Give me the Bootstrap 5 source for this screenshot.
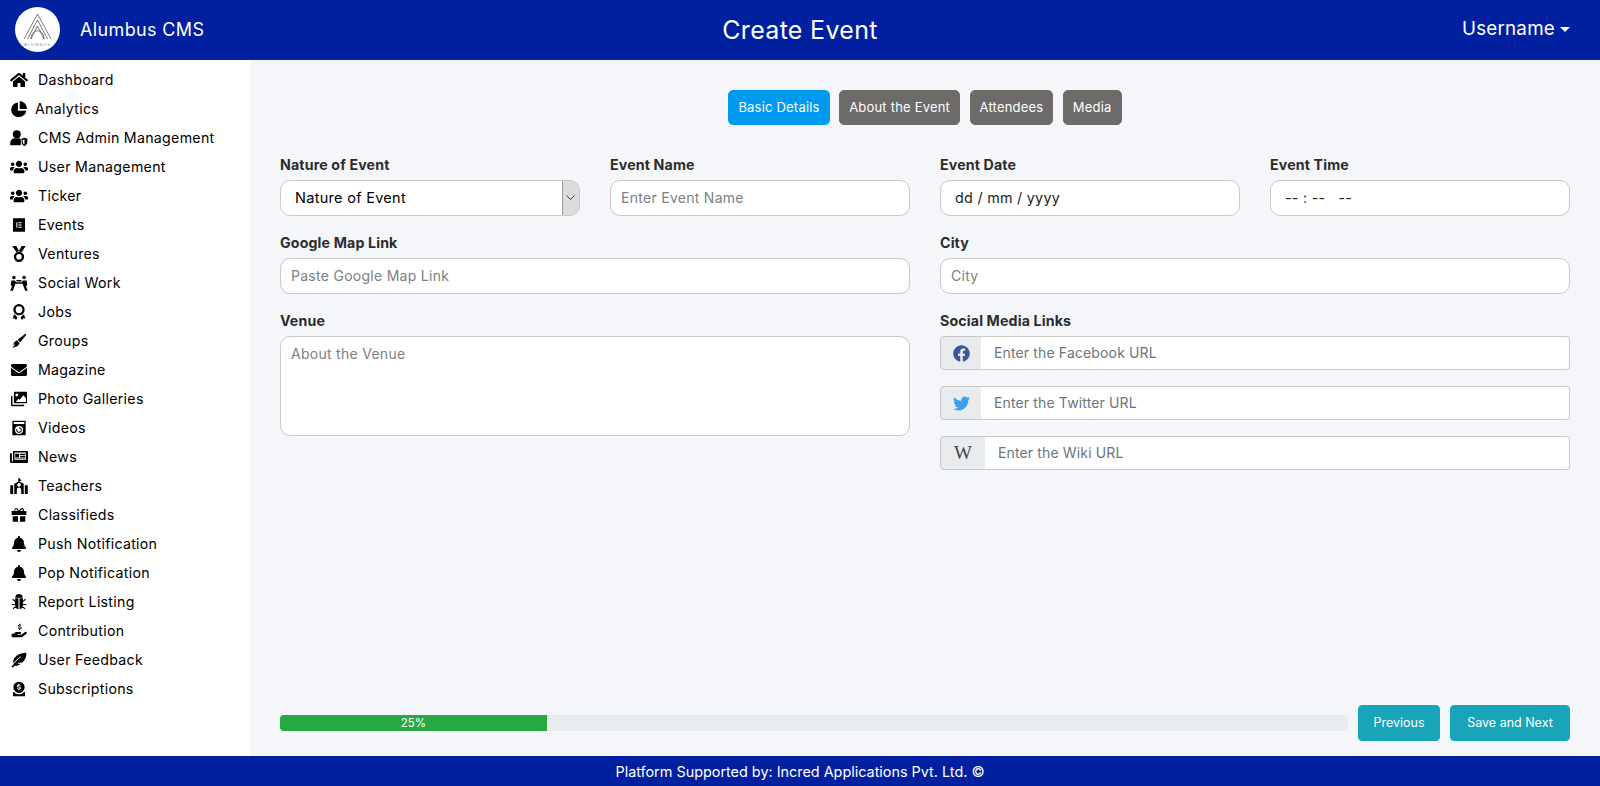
<!DOCTYPE html>
<html lang="en">
<head>
<meta charset="utf-8">
<title>Create Event</title>
<link href="https://cdn.jsdelivr.net/npm/bootstrap@5.3.0/dist/css/bootstrap.min.css" rel="stylesheet">
<style>
html,body{height:100%;overflow:hidden}
body{font-family:Inter,"Open Sans",sans-serif;background:#f5f6fa;color:#000}
.app-shell{height:786px}
.top-bar{height:60px;background:#00209f;border-bottom:1px solid #1d2b5a;color:#fff;flex:none}
.top-side{width:400px}
.logo-disc{width:45px;height:45px;border-radius:50%;background:#fff;margin-left:15px;margin-right:20px;flex:none}
.brand-name{font-size:18px;letter-spacing:.02em}
.page-title{font-size:25px;font-weight:400;letter-spacing:.012em}
.user-toggle{font-size:18.800px;color:#fff;margin-right:30px;padding:0;border:0;background:none;letter-spacing:.012em}
.user-toggle::after{margin-left:5px;vertical-align:.2em}
.side-menu{width:250px;background:#fff;flex:none;padding-top:5px}
.side-item{display:flex;align-items:center;height:29px;padding-left:10px;font-size:14.200px;color:#000;text-decoration:none;letter-spacing:.02em}
.side-glyph{width:18px;height:16px;flex:none;margin-right:10px;fill:#000}
.side-glyph.narrow{margin-right:7px}
.work-area{padding:30px 30px 15px 30px;min-width:0}
.step-btn{height:35px;padding:0 9px;font-size:13px;line-height:33px;color:#fff;background:#6c6b6a;border:1px solid #6c6b6a;border-radius:5px;letter-spacing:.2px}
.step-btn.is-on{background:#0099f0;border-color:#0099f0}
.step-row{gap:9.500px;margin-bottom:30px}
.field-label{display:block;font-size:14.200px;font-weight:700;color:#2c2c2c;line-height:20px;margin-bottom:5px;letter-spacing:.01em}
.field-group{margin-bottom:17px}
.form-control.soft-input,.form-select.soft-input{height:36px;border:1px solid #c9c9c9;border-radius:10px;font-size:14px;letter-spacing:.02em;padding:0 10px 1px;background-color:#fff;box-shadow:none}
.soft-input::placeholder{color:#7c7f84}
.form-select.soft-input{padding-left:14px;font-size:14.500px;color:#000;
background-image:url("data:image/svg+xml,%3Csvg xmlns='http://www.w3.org/2000/svg' width='17' height='34'%3E%3Cpath fill='%23dcdcdc' d='M0 0h17v34H0z'/%3E%3Cpath fill='%23999' d='M0 0h1v34H0z'/%3E%3Cpath fill='none' stroke='%23444' d='M4.500 14.500l4 4 4-4'/%3E%3C/svg%3E");background-position:right 0 center;background-size:17px 34px;background-repeat:no-repeat}
.form-control.soft-input.date-like{padding-left:14px;color:#222;font-size:14.300px}
textarea.form-control.soft-input{height:100px;padding-top:6px;resize:none}
.social-group{height:34px;margin-bottom:16px;flex-wrap:nowrap}
.social-group .input-group-text{width:42px;height:34px;padding:0;justify-content:center;background:#e9ecef;border:1px solid #c9c9c9;border-radius:4px 0 0 4px}
.social-group .input-group-text.wiki-tag{width:46px;font-family:"Liberation Serif",serif;font-size:19px;color:#444}
.social-group .form-control{height:34px;border:1px solid #c9c9c9;border-left:0;border-radius:0 4px 4px 0;font-size:14px;letter-spacing:.01em;padding:0 12px 2px 13px}
.social-group .form-control::placeholder{color:#6c757d}
.social-mark{width:17px;height:17px}
.bottom-row{gap:10px}
.track{flex:1;height:16px;background:#e9ecef;border-radius:4px;font-size:11.500px}
.track .progress-bar{background:#28a745;width:25%;padding-top:2px}
.go-btn{height:36px;padding:1px 0 0;font-size:12.500px;color:#fff;background:#19a5b9;border:1px solid #19a5b9;border-radius:4px}
.go-prev{width:82px}
.go-next{width:120px}
.bottom-bar{height:30px;background:#00209f;color:#fff;font-size:14.400px;flex:none;padding-top:1px}
</style>
</head>
<body>
<div class="app-shell d-flex flex-column">
  <header class="top-bar d-flex align-items-center justify-content-between">
    <div class="top-side d-flex align-items-center">
      <div class="logo-disc d-flex align-items-center justify-content-center">
        <svg width="45" height="45" viewBox="0 0 45 45" fill="none" stroke="#444" stroke-width=".7">
          <path d="M9 32 22.500 7 36 32M12.500 32 22.500 13 32.500 32M16 32 22.500 19 29 32M16 32c0-11 13-11 13 0"/>
          <text x="22.500" y="39" text-anchor="middle" font-family="Liberation Sans,sans-serif" font-size="4.400" letter-spacing=".8" fill="#999" stroke="none">ALUMBUS</text>
        </svg>
      </div>
      <span class="brand-name">Alumbus CMS</span>
    </div>
    <h1 class="page-title m-0">Create Event</h1>
    <div class="top-side d-flex justify-content-end dropdown">
      <button class="user-toggle dropdown-toggle" type="button">Username</button>
    </div>
  </header>
  <div class="d-flex flex-grow-1" style="min-height:0">
    <nav class="side-menu">
      <a class="side-item" href="#"><svg class="side-glyph" viewBox="0 0 576 512"><path d="M280.37 148.26L96 300.11V464a16 16 0 0 0 16 16l112.06-.29a16 16 0 0 0 15.92-16V368a16 16 0 0 1 16-16h64a16 16 0 0 1 16 16v95.64a16 16 0 0 0 16 16.05L464 480a16 16 0 0 0 16-16V300L295.67 148.26a12.19 12.19 0 0 0-15.3 0zM571.6 251.47L488 182.56V44.05a12 12 0 0 0-12-12h-56a12 12 0 0 0-12 12v72.61L318.47 43a48 48 0 0 0-61 0L4.34 251.47a12 12 0 0 0-1.6 16.9l25.5 31A12 12 0 0 0 45.15 301l235.22-193.74a12.19 12.19 0 0 1 15.3 0L530.9 301a12 12 0 0 0 16.9-1.6l25.5-31a12 12 0 0 0-1.7-16.93z"/></svg>Dashboard</a>
      <a class="side-item" href="#"><svg class="side-glyph narrow" viewBox="1 1 22 22"><path d="M10.500 3v11.500H22c-.3 4.500-4.500 8.500-10 8.500a10 10 0 0 1-1.500-20zM13 1c5 0 10 5 10 11H13z"/></svg>Analytics</a>
      <a class="side-item" href="#"><svg class="side-glyph" viewBox="0 0 24 22"><circle cx="9" cy="6" r="5.500"/><path d="M0 21v-3c0-4 3-6.500 6-6.500h6c1 0 2 .3 2.500.8V21H0zM15.500 12l4-1.500 4 1.500v4c0 3-2 5-4 6-2-1-4-3-4-6z"/><path fill="#fff" d="M19.500 13v7c-1.500-1-2.500-2.500-2.500-4v-2.300z"/></svg>CMS Admin Management</a>
      <a class="side-item" href="#"><svg class="side-glyph" viewBox="0 0 640 512"><path d="M96 224c35.300 0 64-28.700 64-64s-28.700-64-64-64-64 28.700-64 64 28.700 64 64 64zm448 0c35.300 0 64-28.700 64-64s-28.700-64-64-64-64 28.700-64 64 28.700 64 64 64zm32 32h-64c-17.600 0-33.500 7.100-45.100 18.600 40.300 22.100 68.900 62 75.100 109.400h66c17.700 0 32-14.300 32-32v-32c0-35.300-28.700-64-64-64zm-256 0c61.900 0 112-50.100 112-112S381.900 32 320 32 208 82.100 208 144s50.100 112 112 112zm76.800 32h-8.300c-20.800 10-43.900 16-68.500 16s-47.600-6-68.500-16h-8.300C179.600 288 128 339.600 128 403.200V432c0 26.500 21.500 48 48 48h288c26.500 0 48-21.500 48-48v-28.800c0-63.600-51.600-115.200-115.200-115.200zm-223.700-13.400C161.500 263.100 145.600 256 128 256H64c-35.300 0-64 28.700-64 64v32c0 17.700 14.300 32 32 32h65.900c6.300-47.400 34.900-87.300 75.200-109.400z"/></svg>User Management</a>
      <a class="side-item" href="#"><svg class="side-glyph" viewBox="0 0 640 512"><path d="M96 224c35.300 0 64-28.700 64-64s-28.700-64-64-64-64 28.700-64 64 28.700 64 64 64zm448 0c35.300 0 64-28.700 64-64s-28.700-64-64-64-64 28.700-64 64 28.700 64 64 64zm32 32h-64c-17.600 0-33.500 7.100-45.100 18.600 40.300 22.100 68.900 62 75.100 109.400h66c17.700 0 32-14.300 32-32v-32c0-35.300-28.700-64-64-64zm-256 0c61.900 0 112-50.100 112-112S381.900 32 320 32 208 82.100 208 144s50.100 112 112 112zm76.800 32h-8.300c-20.800 10-43.900 16-68.500 16s-47.600-6-68.500-16h-8.300C179.600 288 128 339.600 128 403.200V432c0 26.500 21.500 48 48 48h288c26.500 0 48-21.500 48-48v-28.800c0-63.600-51.600-115.200-115.200-115.200zm-223.700-13.400C161.500 263.100 145.600 256 128 256H64c-35.300 0-64 28.700-64 64v32c0 17.700 14.300 32 32 32h65.900c6.300-47.400 34.900-87.300 75.200-109.400z"/></svg>Ticker</a>
      <a class="side-item" href="#"><svg class="side-glyph" viewBox="0 0 24 24"><path fill-rule="evenodd" d="M3 2h18v20H3zM8 8v8h1.500V8zm3 0v1.300h5V8zm0 3.300v1.300h5v-1.300zm0 3.400V16h5v-1.300z"/></svg>Events</a>
      <a class="side-item" href="#"><svg class="side-glyph" viewBox="0 0 24 24"><path d="M2 0h6l4 7 4-7h6l-6 9.500-4-1.500-4 1.500z"/><path fill-rule="evenodd" d="M12 8.500a7.750 7.750 0 1 1 0 15.500 7.750 7.750 0 0 1 0-15.500zm0 3.500a4.200 4.200 0 1 0 0 8.400 4.200 4.200 0 0 0 0-8.400z"/></svg>Ventures</a>
      <a class="side-item" href="#"><svg class="side-glyph" viewBox="0 0 24 22"><circle cx="5" cy="3.500" r="2.400"/><circle cx="19" cy="3.500" r="2.400"/><path d="M1.500 7.500h5L8 10h8l1.500-2.500h5L23.500 14l-2 1 2.500 6.500h-3.500L18 15l-1-3H7l-1 3-2.500 6.500H0L2.500 15l-2-1zM8.500 7h7v1.800h-7z"/></svg>Social Work</a>
      <a class="side-item" href="#"><svg class="side-glyph" viewBox="0 0 24 24"><path fill-rule="evenodd" d="M12 0a8.500 8.500 0 1 1 0 17 8.500 8.500 0 0 1 0-17zm0 3.500a5 5 0 1 0 0 10 5 5 0 0 0 0-10z"/><path d="M4.500 15.500l3.500 2.500 1.500 3-2 3-2-2.500-3 .5zM19.500 15.500l-3.500 2.500-1.500 3 2 3 2-2.500 3 .5z"/></svg>Jobs</a>
      <a class="side-item" href="#"><svg class="side-glyph" viewBox="0 0 24 24"><path d="M21.500 1 23 2.500 14 14 10 10zM9 11l4 4-2 3.500c-2 2-6 3-9 4l4-5-.7-.7-2 2.500c.5-3 1-5 3-6.500z"/></svg>Groups</a>
      <a class="side-item" href="#"><svg class="side-glyph" viewBox="0 0 512 512"><path d="M502.300 190.800c3.900-3.100 9.700-.2 9.700 4.700V400c0 26.500-21.500 48-48 48H48c-26.500 0-48-21.500-48-48V195.600c0-5 5.700-7.800 9.700-4.700 22.400 17.400 52.100 39.500 154.100 113.600 21.100 15.400 56.700 47.800 92.200 47.600 35.700.3 72-32.800 92.300-47.600 102-74.100 131.600-96.300 154-113.700zM256 320c23.200.4 56.600-29.200 73.400-41.400 132.700-96.300 142.800-104.700 173.400-128.700 5.800-4.500 9.200-11.500 9.200-18.900v-19c0-26.500-21.500-48-48-48H48C21.500 64 0 85.500 0 112v19c0 7.400 3.400 14.300 9.200 18.900 30.600 23.900 40.700 32.400 173.400 128.700 16.800 12.200 50.200 41.800 73.400 41.400z"/></svg>Magazine</a>
      <a class="side-item" href="#"><svg class="side-glyph" viewBox="0 0 24 22"><path d="M1 7v12c0 1 1 2 2 2h16v-2H3V7z"/><path fill-rule="evenodd" d="M6 1h16a1 1 0 0 1 1 1v14a1 1 0 0 1-1 1H6a1 1 0 0 1-1-1V2a1 1 0 0 1 1-1zm3 2.500a2 2 0 1 0 0 4 2 2 0 0 0 0-4zM7.500 15h14v-5l-3.500-4-5 6-2-1.500z"/></svg>Photo Galleries</a>
      <a class="side-item" href="#"><svg class="side-glyph" viewBox="0 0 24 24"><path fill-rule="evenodd" d="M3 1h18a1 1 0 0 1 1 1v20a1 1 0 0 1-1 1H3a1 1 0 0 1-1-1V2a1 1 0 0 1 1-1zm1 2v3h16V3zm8 6a6 6 0 1 0 0 12 6 6 0 0 0 0-12zm0 1.800a4.200 4.200 0 1 1-3.700 2.200l1.300.8a2.700 2.700 0 1 0 2.400-1.500z"/></svg>Videos</a>
      <a class="side-item" href="#"><svg class="side-glyph" viewBox="0 0 24 20"><path fill-rule="evenodd" d="M4 2h19a1 1 0 0 1 1 1v14a1 1 0 0 1-1 1H2a2 2 0 0 1-2-2V5h2.500v11H4zm2 2v10h15V4zm1 1.500h5v5H7zm6.500 0H20v2h-6.500zm0 3.300H20v2h-6.500zM7 12h13v1H7z"/></svg>News</a>
      <a class="side-item" href="#"><svg class="side-glyph" viewBox="0 0 24 22"><path fill-rule="evenodd" d="M12 0a.8.8 0 0 1 1 .8V2h2v2h-2v1l5.500 3v14H15v-6a3 3 0 0 0-6 0v6H5.500V8L11 5V.8a.8.8 0 0 1 1-.8zm0 7a2.500 2.500 0 1 0 0 5 2.500 2.500 0 0 0 0-5zM0 10h4v12H0zm20 0h4v12h-4z"/></svg>Teachers</a>
      <a class="side-item" href="#"><svg class="side-glyph" viewBox="0 0 24 24"><path fill-rule="evenodd" d="M7.500 1.500c2 0 3.700 2.300 4.500 4 .8-1.700 2.500-4 4.500-4a3 3 0 0 1 2.500 4.500H23v6H1V6h4.500a3 3 0 0 1 2-4.500zm0 2a1.200 1.200 0 0 0 0 2.500h2.500c-.5-1.200-1.500-2.500-2.500-2.500zm9 0c-1 0-2 1.300-2.500 2.500h2.500a1.200 1.200 0 0 0 0-2.500zM2.500 14h8v8h-7a1 1 0 0 1-1-1zm11 0h8v7a1 1 0 0 1-1 1h-7z"/></svg>Classifieds</a>
      <a class="side-item" href="#"><svg class="side-glyph" viewBox="0 0 448 512"><path d="M224 512c35.320 0 63.970-28.650 63.970-64H160.030c0 35.350 28.650 64 63.970 64zm215.390-149.710c-19.320-20.760-55.470-51.990-55.470-154.290 0-77.700-54.480-139.900-127.940-155.160V32c0-17.670-14.320-32-31.980-32s-31.980 14.330-31.980 32v20.840C118.560 68.100 64.080 130.300 64.080 208c0 102.300-36.150 133.530-55.470 154.290-6 6.450-8.660 14.160-8.610 21.710.11 16.400 12.980 32 32.100 32h383.800c19.120 0 32-15.600 32.100-32 .05-7.550-2.610-15.270-8.610-21.710z"/></svg>Push Notification</a>
      <a class="side-item" href="#"><svg class="side-glyph" viewBox="0 0 448 512"><path d="M224 512c35.320 0 63.970-28.650 63.970-64H160.030c0 35.350 28.650 64 63.970 64zm215.390-149.710c-19.320-20.760-55.470-51.990-55.470-154.290 0-77.700-54.480-139.900-127.940-155.160V32c0-17.670-14.320-32-31.980-32s-31.980 14.330-31.980 32v20.840C118.560 68.100 64.080 130.300 64.080 208c0 102.300-36.150 133.530-55.470 154.290-6 6.450-8.660 14.160-8.610 21.710.11 16.400 12.980 32 32.100 32h383.800c19.120 0 32-15.600 32.100-32 .05-7.550-2.610-15.270-8.610-21.710z"/></svg>Pop Notification</a>
      <a class="side-item" href="#"><svg class="side-glyph" viewBox="1 0 22 24"><path fill-rule="evenodd" d="M12 0a5.500 5.500 0 0 1 5.500 5.500h-11A5.500 5.500 0 0 1 12 0zM6 6.500h5.200V23C8 22.500 6 20 6 16.500H1V15h5v-3L2 8.500l1-1.200 3.500 3zm6.800 0H18v3.800l3.500-3L22.500 8.500 18 12v3h5v1.500h-5c0 3.500-2 6-5.200 6.500zM6.500 18l1.200 1.300L3.500 23l-1-1.200zm11 0 4 3.800-1 1.200-4.200-3.700z"/></svg>Report Listing</a>
      <a class="side-item" href="#"><svg class="side-glyph" viewBox="0 0 24 24"><path d="M12.500 1h1.200v1.200c1 .1 1.800.7 2 1.600l-1.200.3c-.2-.5-.7-.8-1.300-.8-.7 0-1.200.3-1.200.8 0 1.300 4 .6 4 3 0 1-.9 1.800-2.300 2V10.500h-1.200V9c-1.100-.2-2-.8-2.200-1.900l1.200-.3c.2.700.8 1.100 1.600 1.100s1.400-.3 1.400-.9c0-1.300-4-.6-4-3 0-1 .8-1.700 2-1.900z"/><path d="M1 16h3.500c1-1.500 2.500-2.500 4-2.500h5c1 0 1.700.7 1.700 1.500s-.7 1.500-1.700 1.500H10v1h5.500l5.500-4c1-.6 2-.3 2.500.5.400.7.200 1.500-.5 2l-6 5c-.5.400-1 .5-1.500.5H1z"/></svg>Contribution</a>
      <a class="side-item" href="#"><svg class="side-glyph" viewBox="0 0 24 24"><path d="M23 1c.5 6-2 12-7 15h-5l-1.500 1.500H14c-2 2.500-5 3.500-9 3L3.500 23H1l-.5-.5C5 16 10 11 15 7l-.5-.5C10 10 6 13.500 3.500 17c-1-4 .5-8 5-11.500C13 2 18 1 23 1z"/></svg>User Feedback</a>
      <a class="side-item" href="#"><svg class="side-glyph" viewBox="0 0 24 24"><path fill-rule="evenodd" d="M12 1a8.500 8.500 0 1 1 0 17 8.500 8.500 0 0 1 0-17zm-.8 3v1.200c-1.400.2-2.300 1-2.300 2.200 0 2.400 4.300 1.800 4.300 3.200 0 .6-.6.900-1.300.9-.8 0-1.500-.4-1.700-1l-1.300.4c.3 1.100 1.200 1.700 2.300 1.900V14h1.500v-1.200c1.300-.2 2.200-1 2.200-2.200 0-2.400-4.200-1.800-4.200-3.200 0-.5.500-.8 1.200-.8.600 0 1.100.3 1.400.8l1.200-.4c-.3-.9-1.100-1.500-2-1.700V4z"/><path d="M3 16.500h1.500C6 18.700 9 20 12 20s6-1.300 7.500-3.500H21V23H3z"/></svg>Subscriptions</a>
    </nav>
    <main class="work-area flex-grow-1 d-flex flex-column">
      <div class="step-row d-flex justify-content-center">
        <button type="button" class="btn step-btn is-on">Basic Details</button>
        <button type="button" class="btn step-btn">About the Event</button>
        <button type="button" class="btn step-btn">Attendees</button>
        <button type="button" class="btn step-btn">Media</button>
      </div>
      <form class="row flex-grow-1 align-content-start" style="--bs-gutter-x:30px">
        <div class="col-6">
          <div class="row" style="--bs-gutter-x:30px">
            <div class="col-6 field-group">
              <label class="field-label" for="nature">Nature of Event</label>
              <select class="form-select soft-input" id="nature"><option>Nature of Event</option></select>
            </div>
            <div class="col-6 field-group">
              <label class="field-label" for="ename">Event Name</label>
              <input class="form-control soft-input" id="ename" placeholder="Enter Event Name">
            </div>
          </div>
          <div class="field-group">
            <label class="field-label" for="gmap">Google Map Link</label>
            <input class="form-control soft-input" id="gmap" placeholder="Paste Google Map Link">
          </div>
          <div class="field-group">
            <label class="field-label" for="venue">Venue</label>
            <textarea class="form-control soft-input" id="venue" placeholder="About the Venue"></textarea>
          </div>
        </div>
        <div class="col-6">
          <div class="row" style="--bs-gutter-x:30px">
            <div class="col-6 field-group">
              <label class="field-label" for="edate">Event Date</label>
              <input class="form-control soft-input date-like" id="edate" value="dd / mm / yyyy">
            </div>
            <div class="col-6 field-group">
              <label class="field-label" for="etime">Event Time</label>
              <input class="form-control soft-input date-like" id="etime" value="-- : --   --">
            </div>
          </div>
          <div class="field-group">
            <label class="field-label" for="city">City</label>
            <input class="form-control soft-input" id="city" placeholder="City">
          </div>
          <label class="field-label">Social Media Links</label>
          <div class="input-group social-group">
            <span class="input-group-text"><svg class="social-mark" viewBox="0 0 512 512" fill="#3b5998"><path d="M504 256C504 119 393 8 256 8S8 119 8 256c0 123.780 90.690 226.380 209.250 245V327.690h-63V256h63v-54.640c0-62.150 37-96.480 93.670-96.480 27.140 0 55.520 4.840 55.520 4.840v61h-31.280c-30.800 0-40.410 19.120-40.410 38.730V256h68.780l-11 71.690h-57.780V501C413.310 482.380 504 379.780 504 256z"/></svg></span>
            <input class="form-control" placeholder="Enter the Facebook URL">
          </div>
          <div class="input-group social-group">
            <span class="input-group-text"><svg class="social-mark" viewBox="0 0 512 512" fill="#3b9ff0"><path d="M459.370 151.716c.325 4.548.325 9.097.325 13.645 0 138.720-105.583 298.558-298.558 298.558-59.452 0-114.680-17.219-161.137-47.106 8.447.974 16.568 1.299 25.340 1.299 49.055 0 94.213-16.568 130.274-44.832-46.132-.975-84.792-31.188-98.112-72.772 6.498.974 12.995 1.624 19.818 1.624 9.421 0 18.843-1.300 27.614-3.573-48.081-9.747-84.143-51.980-84.143-102.985v-1.299c13.969 7.797 30.214 12.670 47.431 13.319-28.264-18.843-46.781-51.005-46.781-87.391 0-19.492 5.197-37.360 14.294-52.954 51.655 63.675 129.300 105.258 216.365 109.807-1.624-7.797-2.599-15.918-2.599-24.040 0-57.828 46.782-104.934 104.934-104.934 30.213 0 57.502 12.670 76.670 33.137 23.715-4.548 46.456-13.645 66.599-25.665-7.798 24.366-24.366 44.833-46.132 57.827 21.117-2.273 41.584-8.122 60.426-16.243-14.292 20.791-32.161 39.308-52.628 54.253z"/></svg></span>
            <input class="form-control" placeholder="Enter the Twitter URL">
          </div>
          <div class="input-group social-group">
            <span class="input-group-text wiki-tag">W</span>
            <input class="form-control" placeholder="Enter the Wiki URL">
          </div>
        </div>
      </form>
      <div class="bottom-row d-flex align-items-center">
        <div class="progress track"><div class="progress-bar" role="progressbar">25%</div></div>
        <button type="button" class="btn go-btn go-prev">Previous</button>
        <button type="button" class="btn go-btn go-next">Save and Next</button>
      </div>
    </main>
  </div>
  <footer class="bottom-bar d-flex align-items-center justify-content-center">Platform Supported by: Incred Applications Pvt. Ltd. ©</footer>
</div>
</body>
</html>
